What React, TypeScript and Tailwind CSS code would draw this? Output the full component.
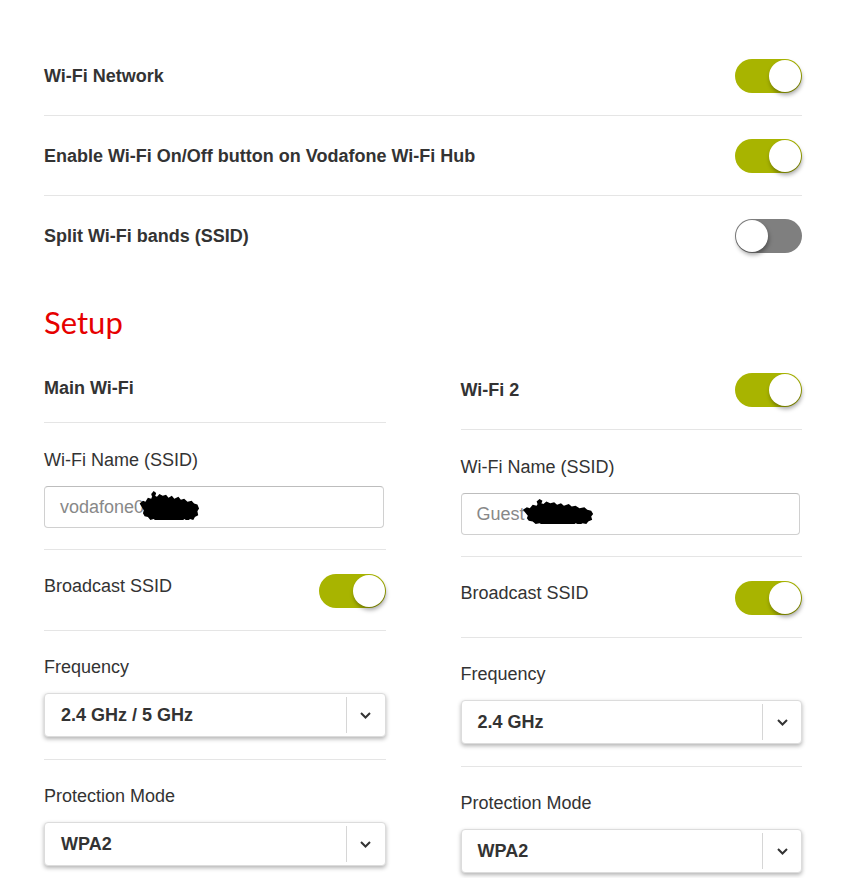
import React from "react";

const sans = "font-['Liberation_Sans',Arial,sans-serif]";

function Toggle({ on }: { on: boolean }) {
  return (
    <div
      className={`relative h-[34px] w-[67px] shrink-0 rounded-full ${
        on ? "bg-[#a8b400]" : "bg-[#7f7f7f]"
      }`}
    >
      <div
        className={`absolute top-px h-[32px] w-[32px] rounded-full bg-white shadow-[1px_3px_4px_rgba(0,0,0,0.35)] ${
          on ? "right-px" : "left-px"
        }`}
      />
    </div>
  );
}

// redaction blot over part of the SSID
function Scribble({ className }: { className: string }) {
  return (
    <svg viewBox="0 0 80 30" preserveAspectRatio="none" className={className} aria-hidden>
      <path
        d="M2 13l4-3 3 1 3-4 4 1 2-4 5 2 3-3 4 2 4-1 3 3 4-2 3 3 5-2 3 3 4-1 4 3 5-1 3 3 4 1 2 4-2 3 1 4-4 2-2 3-4-1-3 2-4-2-3 3-3-2-4 1-3-1-4 2-3-2-4 1-3 2-3-3-4 1-3-2-4 1-3-3-4-1-2-3 1-3z"
        fill="#000"
      />
      <path d="M16 3l3-3 3 2-1 3-4 1zM58 26l3 0 2 3-4 1-2-2zM30 24l4 2-2 3-3-2z" fill="#000" />
    </svg>
  );
}

function Select({ value }: { value: string }) {
  return (
    <div className="flex h-[44px] items-center rounded-[4px] border border-[#dcdcdc] bg-white shadow-[0_2px_4px_rgba(0,0,0,0.3)]">
      <span className="flex-1 pl-4 text-[18px] font-bold text-[#333]">{value}</span>
      <div className="h-[36px] w-px bg-[#d6d6d6]" />
      <div className="flex w-[38px] items-center justify-center">
        <svg width="11" height="7" viewBox="0 0 11 7">
          <path d="M1 1l4.5 4.5L10 1" fill="none" stroke="#333" strokeWidth="2" />
        </svg>
      </div>
    </div>
  );
}

function TopRow({ label, on, last }: { label: string; on: boolean; last?: boolean }) {
  return (
    <div
      className={`flex items-center justify-between pt-[23px] pb-[22px] ${
        last ? "" : "border-b border-[#e5e5e5]"
      }`}
    >
      <span className="text-[18px] font-bold text-[#333]">{label}</span>
      <Toggle on={on} />
    </div>
  );
}

function Column({
  title,
  titleToggle,
  ssid,
  scribble,
  frequency,
}: {
  title: string;
  titleToggle: boolean;
  ssid: string;
  scribble: string;
  frequency: string;
}) {
  return (
    <div>
      {/* Header */}
      <div className="flex items-center justify-between border-b border-[#e5e5e5] pb-[22px]">
        <span
          className={`text-[18px] leading-6 font-bold text-[#333] ${
            titleToggle ? "pt-0" : "pt-[3px]"
          }`}
        >
          {title}
        </span>
        {titleToggle && <Toggle on />}
      </div>

      {/* SSID */}
      <div className="border-b border-[#e5e5e5] pt-[25px] pb-[21px]">
        <div className="mb-[14px] text-[18px] leading-6 text-[#333]">Wi-Fi Name (SSID)</div>
        <div className="relative mr-[2px] flex h-[42px] items-center rounded-[4px] border border-[#d0d0d0] border-t-[#bdbdbd] bg-white pl-[15px] text-[18px] text-[#888]">
          {ssid}
          <Scribble className={scribble} />
        </div>
      </div>

      {/* Broadcast */}
      <div className="flex items-center justify-between border-b border-[#e5e5e5] pt-[23px] pb-[22px]">
        <span className="pb-2 text-[18px] text-[#333]">Broadcast SSID</span>
        <Toggle on />
      </div>

      {/* Frequency */}
      <div className="border-b border-[#e5e5e5] pt-6 pb-[22px]">
        <div className="mb-[14px] text-[18px] leading-6 text-[#333]">Frequency</div>
        <Select value={frequency} />
      </div>

      {/* Protection */}
      <div className="pt-6">
        <div className="mb-[14px] text-[18px] leading-6 text-[#333]">Protection Mode</div>
        <Select value="WPA2" />
      </div>
    </div>
  );
}

export default function App() {
  return (
    <div className={`min-h-[878px] w-[853px] bg-white pt-[36px] pr-[51px] pb-3 pl-[44px] ${sans}`}>
      <TopRow label="Wi-Fi Network" on />
      <TopRow label="Enable Wi-Fi On/Off button on Vodafone Wi-Fi Hub" on />
      <TopRow label="Split Wi-Fi bands (SSID)" on={false} last />

      <h1 className="mt-[29px] mb-[32px] font-['Lato',sans-serif] text-[31px] leading-[37px] text-[#e60000]">
        Setup
      </h1>

      <div className="grid grid-cols-2 gap-[75px]">
        <Column
          title="Main Wi-Fi"
          titleToggle={false}
          ssid="vodafone0"
          scribble="absolute left-[93px] top-[4px] h-[29px] w-[66px]"
          frequency="2.4 GHz / 5 GHz"
        />
        <Column
          title="Wi-Fi 2"
          titleToggle
          ssid="Guest"
          scribble="absolute left-[59px] top-[5px] h-[25px] w-[78px]"
          frequency="2.4 GHz"
        />
      </div>
    </div>
  );
}
